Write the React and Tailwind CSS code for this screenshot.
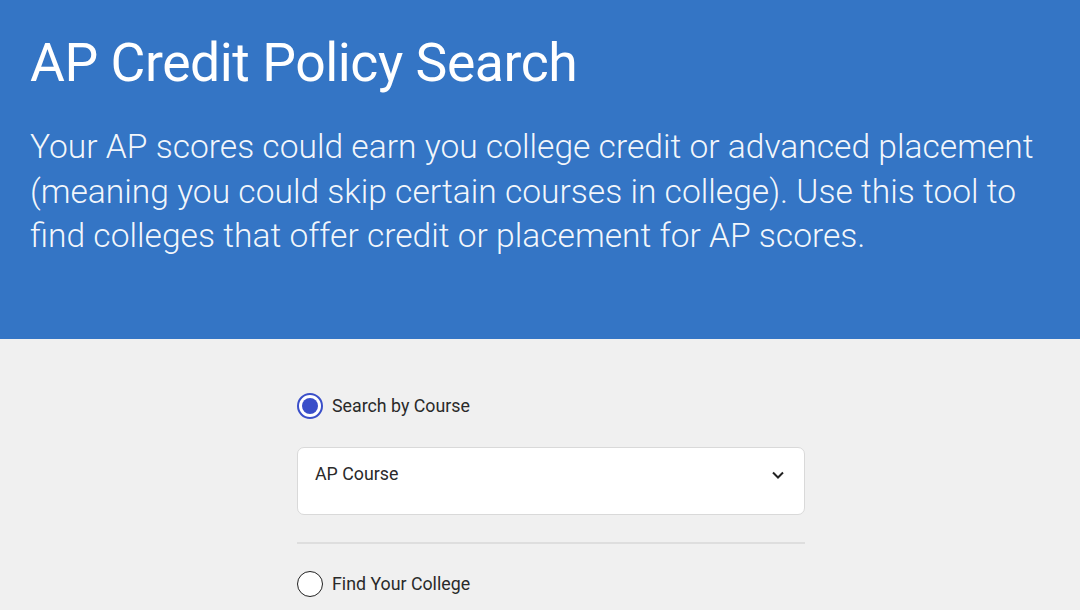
import React from "react";

export default function App() {
  return (
    <div className="min-h-[610px] bg-[#f0f0f0]" style={{ fontFamily: "Roboto, 'Liberation Sans', sans-serif" }}>
      <header className="bg-[#3475c5] text-white h-[339px] px-[30px] pt-[26px]">
        <h1 className="text-[53.5px] leading-[74px] font-normal tracking-[-0.45px]">AP Credit Policy Search</h1>
        <p className="mt-[25px] text-[33.6px] leading-[44.5px] font-light text-white/95 max-w-[1030px]">
          Your AP scores could earn you college credit or advanced placement (meaning you could skip certain courses in college). Use this tool to find colleges that offer credit or placement for AP scores.
        </p>
      </header>
      <main className="w-[508px] mx-auto pt-[54px] translate-x-[11px]">
        <label className="flex items-center gap-[9px]">
          <span className="w-[26px] h-[26px] rounded-full border-2 border-[#3a4fc9] bg-white flex items-center justify-center">
            <span className="w-[16px] h-[16px] rounded-full bg-[#3a4fc9]" />
          </span>
          <span className="text-[17.8px] text-[#2a2a2a]">Search by Course</span>
        </label>
        <div className="mt-[27px] h-[68px] bg-white border border-[#d9d9d9] rounded-[7px] flex items-start justify-between pl-[17px] pr-[19px] pt-[13px]">
          <span className="text-[17.8px] text-[#2a2a2a]">AP Course</span>
          <svg className="mt-[9px]" width="14" height="10" viewBox="0 0 14 10" fill="none" stroke="#222" strokeWidth="2">
            <path d="M2 2.5 L7 7.5 L12 2.5" />
          </svg>
        </div>
        <div className="mt-[27px] h-[2px] bg-[#dedede]" />
        <label className="mt-[27px] flex items-center gap-[9px]">
          <span className="w-[26px] h-[26px] rounded-full border-[1.5px] border-[#222] bg-white" />
          <span className="text-[17.8px] text-[#2a2a2a]">Find Your College</span>
        </label>
      </main>
    </div>
  );
}
